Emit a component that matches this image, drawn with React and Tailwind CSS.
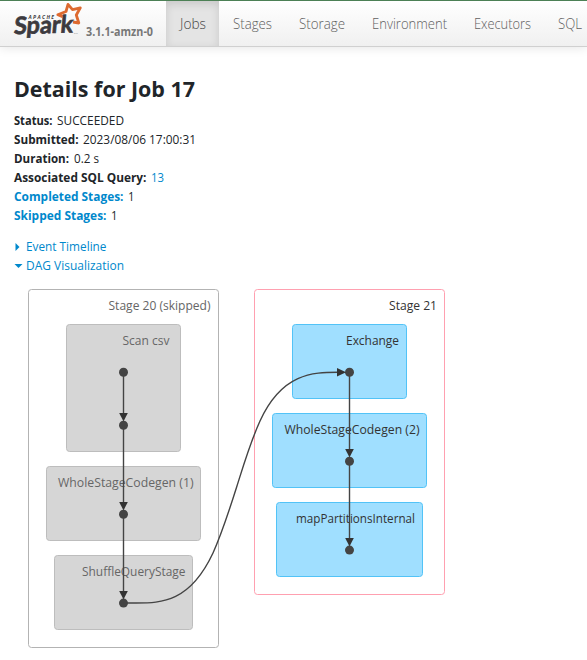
import React from "react";

const tabs = [
  { label: "Jobs", cls: "w-[53px] bg-[#e4e4e4] text-[#444] shadow-[inset_0_3px_8px_rgba(0,0,0,0.125)]", len: 26 },
  { label: "Stages", cls: "w-[66px] text-[#606060]", len: 39 },
  { label: "Storage", cls: "w-[73px] text-[#606060]", len: 46 },
  { label: "Environment", cls: "w-[102px] text-[#606060]", len: 75 },
  { label: "Executors", cls: "w-[84px] text-[#606060]", len: 57 },
  { label: "SQL", cls: "w-[51px] text-[#606060]", len: 24 },
];

function Label({ x = 0, y, len, children, ...rest }) {
  return (
    <text x={x} y={y} textLength={len} lengthAdjust="spacingAndGlyphs" {...rest}>
      {children}
    </text>
  );
}

/* A single line of text set to a known measure. */
function Fit({ len, className = "", children }) {
  return (
    <svg width={len} height="19" className={"block shrink-0 overflow-visible " + className} fill="currentColor">
      <Label y="14" len={len}>{children}</Label>
    </svg>
  );
}

function Logo() {
  return (
    <svg width="68" height="38" viewBox="0 0 68 38" className="block overflow-visible">
      <path
        d="M49.5 15.6 L44.8 13.8 L53 10.5 L55 3.4 L59.5 8.6 L67.3 6.8 L63.3 14 L65.8 22 L60 21"
        fill="none"
        stroke="#dd6a30"
        strokeWidth="2.8"
        strokeLinejoin="round"
      />
      <text x="15.5" y="17.5" fontSize="5" textLength="25.5" className="font-bold italic" fill="#3c3a3e">APACHE</text>
      <g transform="translate(0.5 33.3) rotate(-2) skewX(-7)">
        <text x="0" y="0" fontSize="24" textLength="59" lengthAdjust="spacingAndGlyphs" className="font-[Lato,sans-serif] font-bold" fill="#3c3a3e" stroke="#3c3a3e" strokeWidth="0.7">Spark</text>
      </g>
      <text x="61" y="33" fontSize="2.5" fill="#777">TM</text>
    </svg>
  );
}

const skipped = [
  { x: 66.5, y: 324.5, w: 114, h: 127, label: "Scan csv", tx: 122.5, len: 47 },
  { x: 46.5, y: 466.5, w: 154, h: 74, label: "WholeStageCodegen (1)", tx: 58, len: 135.5 },
  { x: 54.5, y: 555.5, w: 138, h: 74, label: "ShuffleQueryStage", tx: 82, len: 103.5 },
];
const active = [
  { x: 292.5, y: 324.5, w: 114, h: 74, label: "Exchange", tx: 346, len: 53 },
  { x: 272.5, y: 413.5, w: 154, h: 74, label: "WholeStageCodegen (2)", tx: 284.5, len: 135 },
  { x: 276.5, y: 502.5, w: 146, h: 74, label: "mapPartitionsInternal", tx: 296, len: 119 },
];
const links = [
  [123.5, 372, 425], [123.5, 425, 514], [123.5, 514, 603],
  [349.5, 372, 461], [349.5, 461, 550],
];
const dots = [
  [123.5, 372.3], [123.5, 425.3], [123.5, 514.3], [123.5, 603.1],
  [349.5, 372.3], [349.5, 461.2], [349.5, 550.1],
];

function Cluster({ items, fill, stroke, color }) {
  return items.map((c) => (
    <g key={c.label}>
      <rect x={c.x} y={c.y} width={c.w} height={c.h} rx="3" fill={fill} stroke={stroke} />
      <Label x={c.tx} y={c.y + 20.5} len={c.len} fill={color}>{c.label}</Label>
    </g>
  ));
}

function Dag() {
  return (
    <svg width="587" height="375" viewBox="0 285 587 375" className="block text-[12.5px]">
      <rect x="28.5" y="289.5" width="190" height="358" rx="3" fill="#fff" stroke="#b3b3b3" />
      <rect x="254.5" y="289.5" width="190" height="305" rx="3" fill="#fff" stroke="#ffa0b0" />
      <Label x="108.5" y="310" len="102" fill="#666">Stage 20 (skipped)</Label>
      <Label x="389" y="310" len="48" fill="#333">Stage 21</Label>
      <Cluster items={skipped} fill="#d6d6d6" stroke="#bdbdbd" color="#666" />
      <Cluster items={active} fill="#a0dfff" stroke="#52c3f7" color="#333" />
      <g fill="#444">
        {dots.map(([x, y]) => <circle key={x + "-" + y} cx={x} cy={y} r="4.5" />)}
      </g>
      <g fill="none" stroke="#444" strokeWidth="1.4">
        {links.map(([x, a, b]) => <path key={x + "-" + a} d={`M${x} ${a}V${b - 8}`} />)}
        <path d="M123.5 603H136C162 603 190 602 213 553C222 533 230 508 236.5 487.5C243 467 250 443 260 421C282 373 313 372.3 338 372.3" />
      </g>
      <g fill="#333">
        {links.map(([x, , b]) => <path key={x + "-" + b} d={`M${x - 4.3} ${b - 12}H${x + 4.3}L${x} ${b - 3.5}Z`} />)}
        <path d="M337 368V376.6L346 372.3Z" />
      </g>
    </svg>
  );
}

function Row({ label, len, value, vlen, link, vlink }) {
  return (
    <div className="flex h-[19px] gap-[5px]">
      <Fit len={len} className={link ? "font-bold text-[#0088cc]" : "font-bold text-[#212529]"}>{label}</Fit>
      <Fit len={vlen} className={vlink ? "text-[#0088cc]" : "text-[#212529]"}>{value}</Fit>
    </div>
  );
}

export default function App() {
  return (
    <div className="h-[660px] w-[587px] overflow-hidden bg-white font-['Open_Sans','Noto_Sans',sans-serif] text-[12.5px]">
      <header className="flex h-[47px] w-full border-t border-b border-t-[#4c8055] border-b-[#d0d0d0] bg-linear-to-b from-white to-[#f0f0f0] shadow-[0_1px_10px_rgba(0,0,0,0.1)]">
        <div className="flex w-[166px] shrink-0 pl-[13px]">
          <Logo />
          <div className="mt-[21px] ml-[5px] text-[11.5px] text-[#777]">
            <Fit len={67} className="font-bold">3.1.1-amzn-0</Fit>
          </div>
        </div>
        <nav className="flex shrink-0 text-[14px] font-light">
          {tabs.map((t) => (
            <div key={t.label} className={"flex shrink-0 justify-center pt-[14px] " + t.cls}>
              <Fit len={t.len}>{t.label}</Fit>
            </div>
          ))}
        </nav>
      </header>
      <main>
        <section className="h-[238px] pt-[31px] pl-[13.5px]">
          <h3 className="h-[33px] pt-[5px] text-[22px] font-bold text-[#212529]">
            <Fit len={181}>Details for Job 17</Fit>
          </h3>
          <div>
            <Row label="Status:" len={38.5} value="SUCCEEDED" vlen={67} />
            <Row label="Submitted:" len={64.5} value="2023/08/06 17:00:31" vlen={113} />
            <Row label="Duration:" len={55} value="0.2 s" vlen={25} />
            <Row label="Associated SQL Query:" len={132.5} value="13" vlen={13} vlink />
            <Row label="Completed Stages:" len={109.5} value="1" vlen={6.5} link />
            <Row label="Skipped Stages:" len={92.5} value="1" vlen={6.5} link />
          </div>
          <div className="mt-[12px] text-[#0088cc]">
            <div className="flex h-[19px]">
              <svg width="12" height="19" fill="currentColor"><path d="M1.5 6L5.5 10L1.5 14Z" /></svg>
              <Fit len={80.5}>Event Timeline</Fit>
            </div>
            <div className="flex h-[19px]">
              <svg width="12" height="19" fill="currentColor"><path d="M0.5 8H8.5L4.5 12Z" /></svg>
              <Fit len={98}>DAG Visualization</Fit>
            </div>
          </div>
        </section>
        <Dag />
      </main>
    </div>
  );
}
